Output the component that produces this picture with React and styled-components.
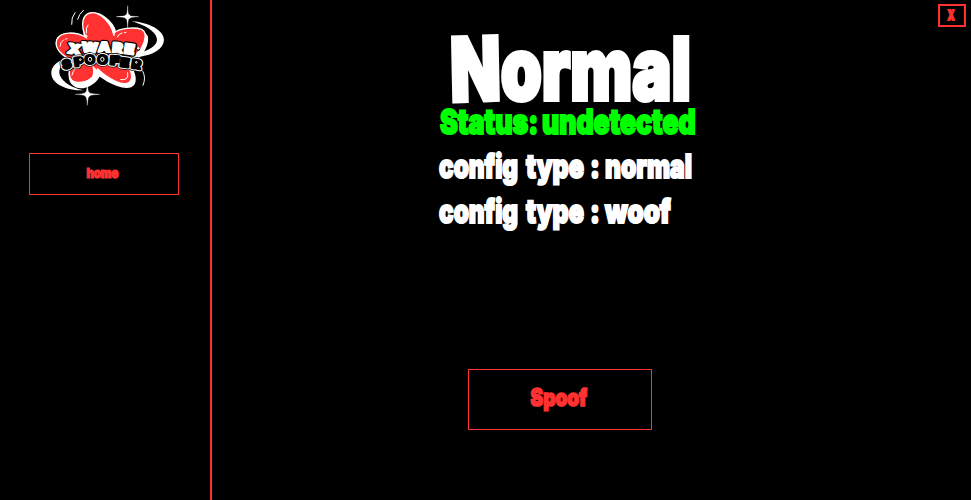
import React from "react";
import styled, { createGlobalStyle } from "styled-components";

const RED = "#ff3131";

const Global = createGlobalStyle`
  * { box-sizing: border-box; }
  body { margin: 0; background: #000; overflow: hidden; font-family: Inter, "Liberation Sans", sans-serif; }
  button { font: inherit; padding: 0; margin: 0; background: #000; border-radius: 0; cursor: pointer; }
`;

const Window = styled.div`
  display: flex;
  width: 971px;
  height: 500px;
  background: #000;
`;

const Sidebar = styled.aside`
  display: flex;
  flex-direction: column;
  flex: none;
  width: 212px;
  border-right: 2px solid ${RED};
`;

const Logo = styled.svg`
  display: block;
  width: 135px;
  height: 110px;
  margin-left: 40px;
`;

const Glyphs = styled.span`
  display: block;
  flex: none;
  white-space: pre;
  font-weight: 900;
  font-size: ${(p) => p.$size}px;
  line-height: ${(p) => p.$leading || 1};
  color: ${(p) => p.$color || "#fff"};
  letter-spacing: ${(p) => p.$track || 0}px;
  -webkit-text-stroke: ${(p) => p.$stroke || 0}px ${(p) => p.$color || "#fff"};
  transform: scaleX(${(p) => p.$scale});
  transform-origin: ${(p) => p.$origin || "left"} center;
`;

const TiltedCap = styled.span`
  display: inline-block;
  transform: rotate(-1.5deg) scaleY(1.02);
`;

const NavButton = styled.button`
  display: flex;
  align-items: center;
  justify-content: center;
  width: 150px;
  height: 42px;
  margin: 43px 0 0 29px;
  padding: 0 3px 2px 0;
  border: 1px solid ${RED};
`;

const Main = styled.main`
  display: flex;
  flex: 1;
  align-items: flex-start;
  justify-content: space-between;
`;

const Content = styled.section`
  display: flex;
  flex-direction: column;
  align-items: flex-start;
  width: 300px;
  height: 500px;
  margin-left: 227px;
`;

const Line = styled.div`
  display: flex;
  align-items: center;
  height: ${(p) => p.$height}px;
  margin-top: ${(p) => p.$top || 0}px;
  margin-left: ${(p) => p.$left || 0}px;
`;

const Word = styled.span`
  display: block;
  width: ${(p) => p.$width}px;
`;

const SpoofButton = styled.button`
  display: flex;
  align-items: center;
  justify-content: center;
  width: 184px;
  height: 61px;
  margin: 140px 0 0 29px;
  padding: 0 2px 4px 0;
  border: 1px solid ${RED};
`;

const CloseButton = styled.button`
  display: flex;
  align-items: center;
  justify-content: center;
  width: 28px;
  height: 23px;
  margin: 4px 5px 0 0;
  padding: 0 2px 1px 0;
  border: 2px solid ${RED};
`;

const LogoText = styled.text`
  font-family: Inter, sans-serif;
  font-weight: 900;
  font-size: ${(p) => p.$size}px;
  text-anchor: middle;
  fill: ${(p) => p.$color};
  stroke: ${(p) => p.$color};
  stroke-width: ${(p) => p.$width}px;
  stroke-linejoin: round;
`;

const upper = [
  ["X", 102, 162, 8, 1.25], ["W", 149, 157, 3, 1.1], ["A", 192, 156, 2, 1.12], ["R", 231, 158, 5, 1.12], ["E", 266, 162, 8, 1.2],
];
const lower = [
  ["S", 83, 205, -14, 1.1], ["P", 118, 198, -8, 1.15], ["O", 150, 191, -4, 1.08], ["O", 187, 191, 2, 1.08], ["F", 223, 194, 5, 1.3], ["E", 253, 200, 7, 1.2], ["R", 287, 205, 9, 1.15],
];

function LogoWord({ letters, size, color, width }) {
  return letters.map(([c, x, y, r, s], i) => (
    <LogoText key={i} transform={`translate(${x} ${y}) rotate(${r}) scale(${s} 1)`} $size={size} $color={color} $width={width}>{c}</LogoText>
  ));
}

function SpooferLogo() {
  return (
    <Logo viewBox="0 0 405 330" aria-label="Xware Spoofer">
      <path d="M275 64C325 66 374 92 372 121C370 149 337 165 300 170L302 158C335 147 356 132 350 113C344 93 315 75 275 64Z" fill="#fff" />
      <path d="M91 174C57 177 32 198 34 221C36 254 84 272 130 271C87 260 60 240 58 218C57 200 70 187 93 180Z" fill="#fff" />
      <path d="M143 147C111 111 57 87 48 116C42 138 61 160 100 170C84 202 80 229 93 245C112 267 156 255 174 220C199 239 254 268 274 250C288 235 274 208 264 181C296 173 316 137 317 112C317 85 270 80 222 93C215 60 171 25 146 40C122 54 125 99 143 147Z" transform="translate(4 5)" fill="#fff" stroke="#fff" strokeWidth="7" strokeLinejoin="round" />
      <path d="M138 112C119 72 129 45 149 39C178 31 214 70 221 103Q223 111 222 99C235 85 283 80 305 88C328 99 310 150 282 167L259 181C271 210 283 232 268 247C249 260 204 237 173 207C163 231 142 249 111 247C83 244 83 214 98 181C66 169 42 145 50 120C61 91 110 96 138 112Z" fill={RED} stroke="#fff" strokeWidth="4" />
      <path d="M157 196C170 210 181 218 190 224L174 214C168 232 159 243 149 249C159 232 162 214 157 196Z" fill="#fff" />
      <g fill="none" stroke="#fff" strokeWidth="3" strokeLinecap="round">
        <path d="M95 73Q93 53 105 38M113 58Q117 42 130 31M139 99Q137 82 144 75M140 105L141 110M232 111Q235 101 246 99M253 98L258 97M60 139Q60 126 71 119M77 117L81 116M308 213Q319 233 309 256" />
        <path d="M96 225Q99 211 106 206M242 239Q268 243 263 218M255 205L251 200" />
      </g>
      <path d="M263 17Q264 45 267 47Q272 49 296 50Q272 51 267 54Q264 57 263 84Q262 57 258 54Q253 51 229 50Q253 49 258 46Q262 44 263 17Z" fill="#fff" stroke="#fff" />
      <path d="M142 248Q143 275 148 279Q155 282 179 283Q154 284 148 288Q143 292 142 316Q141 292 136 288Q130 284 106 283Q131 282 136 278Q141 275 142 248Z" fill="#fff" stroke="#fff" />
      <circle cx="263" cy="50" r="8" fill="#fff" />
      <circle cx="142" cy="283" r="8" fill="#fff" />
      <LogoWord letters={upper} size={41} color="#000" width={13} />
      <LogoWord letters={upper} size={41} color="#fff" width={6} />
      <circle cx="295" cy="146" r="6" fill="#000" />
      <circle cx="295" cy="145" r="4" fill="#fff" />
      <circle cx="294" cy="159" r="4" fill="#fff" />
      <LogoWord letters={lower} size={35} color="#000" width={17} />
      <LogoWord letters={lower} size={35} color="#fff" width={13} />
      <LogoWord letters={lower} size={35} color="#000" width={7} />
      <g fill="#000" stroke="#fff" strokeWidth="3">
        <ellipse cx="150" cy="178" rx="5" ry="6" />
        <ellipse cx="187" cy="178" rx="5" ry="6" />
        <circle cx="121" cy="179" r="2.5" />
        <circle cx="289" cy="187" r="2.5" />
      </g>
    </Logo>
  );
}

function ConfigLine({ top, value, scale }) {
  return (
    <Line $height={36} $top={top}>
      <Word $width={87}><Glyphs $size={33} $stroke={2} $scale={0.735}>config</Glyphs></Word>
      <Word $width={64}><Glyphs $size={33} $stroke={2} $scale={0.76}>type</Glyphs></Word>
      <Word $width={15}><Glyphs $size={33} $stroke={2} $scale={0.8}>:</Glyphs></Word>
      <Word $width={100}><Glyphs $size={33} $stroke={2} $scale={scale}>{value}</Glyphs></Word>
    </Line>
  );
}

export default function App() {
  return (
    <>
      <Global />
      <Window>
        <Sidebar>
          <SpooferLogo />
          <NavButton>
            <Glyphs $size={13} $color={RED} $stroke={1.2} $scale={0.87} $origin="center">home</Glyphs>
          </NavButton>
        </Sidebar>
        <Main>
          <Content>
            <Line $height={71} $top={34} $left={11}>
              <Glyphs $size={86} $leading={0.8} $stroke={4} $scale={0.765}><TiltedCap>N</TiltedCap>ormal</Glyphs>
            </Line>
            <Line $height={33} $left={1}>
              <Word $width={102}><Glyphs $size={34} $color="#00ff00" $stroke={2} $scale={0.785}>Status:</Glyphs></Word>
              <Word $width={154}><Glyphs $size={34} $color="#00ff00" $stroke={2} $scale={0.78}>undetected</Glyphs></Word>
            </Line>
            <ConfigLine top={10} value="normal" scale={0.743} />
            <ConfigLine top={9} value="woof" scale={0.785} />
            <SpoofButton>
              <Glyphs $size={24} $color={RED} $stroke={1.7} $scale={0.79} $origin="center">Spoof</Glyphs>
            </SpoofButton>
          </Content>
          <CloseButton aria-label="Close">
            <Glyphs $size={13} $color={RED} $stroke={2} $scale={0.65} $origin="center">X</Glyphs>
          </CloseButton>
        </Main>
      </Window>
    </>
  );
}
